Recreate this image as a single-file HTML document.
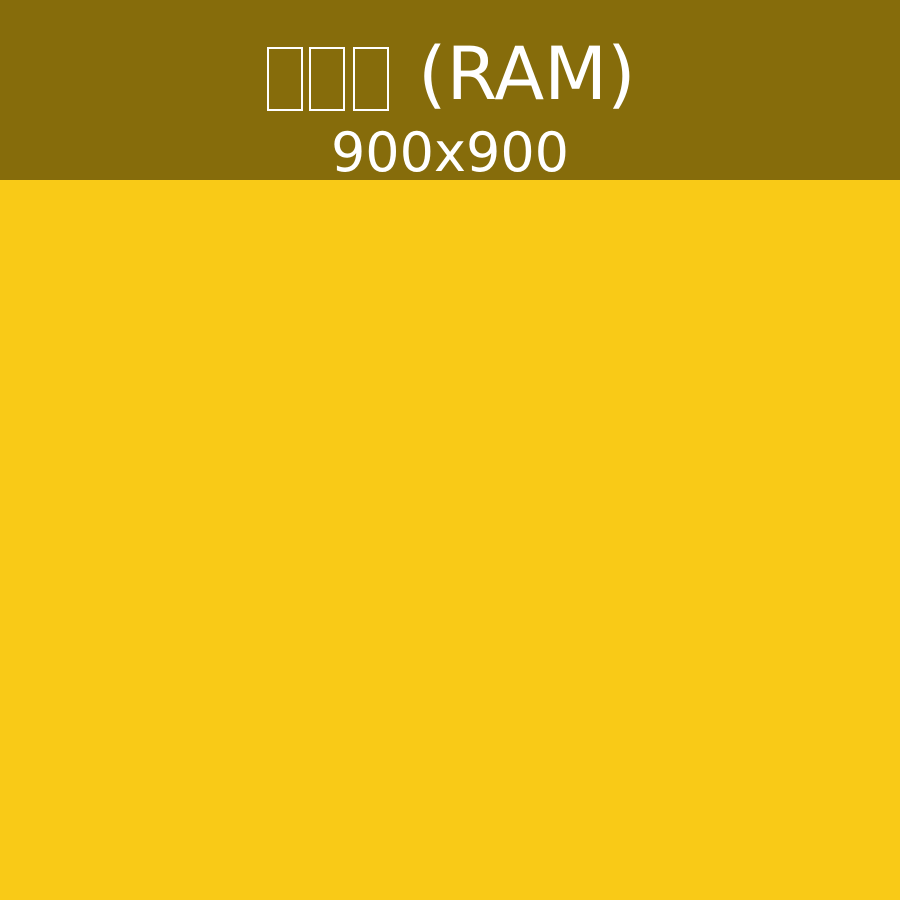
<!DOCTYPE html>
<html><head><meta charset="utf-8"><style>
html,body{margin:0;padding:0;width:900px;height:900px;overflow:hidden;background:#f9ca17;font-family:"DejaVu Sans","Liberation Sans",sans-serif;color:#fff}
.hdr{position:absolute;left:0;top:0;width:900px;height:180px;background:#866c0b}
.b{position:absolute;top:47px;width:32px;height:60px;border:2px solid #fff}
.t{position:absolute;left:418px;top:25px;font-size:73px;line-height:100px;white-space:nowrap}
.s{position:absolute;left:0;width:900px;text-align:center;top:118px;font-size:54px;line-height:70px}
</style></head><body>
<div class="hdr">
<div class="b" style="left:267px"></div>
<div class="b" style="left:309px"></div>
<div class="b" style="left:353px"></div>
<div class="t">(RAM)</div>
<div class="s">900x900</div>
</div>
</body></html>
